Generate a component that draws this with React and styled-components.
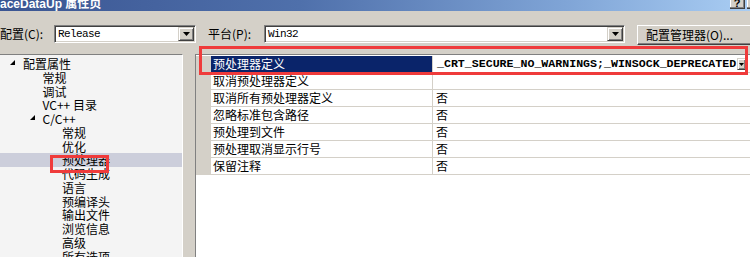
import React from "react";
import styled, { createGlobalStyle } from "styled-components";

const GlobalStyle = createGlobalStyle`
  body {
    margin: 0;
    background: #d4d0c8;
    font-family: "Noto Sans CJK SC", "Liberation Sans", sans-serif;
    color: #000;
  }
`;

const Window = styled.div`
  position: relative;
  width: 750px;
  height: 257px;
  overflow: hidden;
  display: flex;
  flex-direction: column;
  background: #d4d0c8;
`;

const TitleBar = styled.div`
  height: 11px;
  flex: none;
  overflow: hidden;
  display: flex;
  justify-content: space-between;
  background: linear-gradient(
    to right,
    #3a5592 0%,
    #4f70ab 40%,
    #7fa4d6 75%,
    #a9cdf3 100%
  );
`;

const TitleText = styled.span`
  display: block;
  margin-top: -2px;
  color: #fff;
  font-family: "Liberation Sans", "Noto Sans CJK SC", sans-serif;
  font-weight: bold;
  font-size: 12px;
  line-height: 12px;
  white-space: nowrap;
`;

const CaptionButtons = styled.div`
  display: flex;
  gap: 2px;
  margin-right: -12px;
`;

const CaptionButton = styled.div`
  width: 15px;
  height: 9px;
  box-sizing: border-box;
  background: #d4d0c8;
  border-right: 1px solid #404040;
  border-bottom: 1px solid #404040;
  box-shadow: inset -1px -1px 0 #808080, inset 1px 0 0 #fff;
  font-family: "Liberation Sans", sans-serif;
  font-weight: bold;
  font-size: 11px;
  line-height: 6px;
  text-align: center;
  overflow: hidden;
`;

const Toolbar = styled.div`
  height: 43px;
  flex: none;
  box-sizing: border-box;
  padding-top: 14px;
  display: flex;
  align-items: flex-start;
`;

const FieldLabel = styled.div`
  flex: none;
  width: ${(p) => p.$w}px;
  margin-left: ${(p) => p.$gap || 0}px;
  font-size: 12px;
  line-height: 18px;
  white-space: nowrap;
`;

const Combo = styled.div`
  flex: none;
  width: ${(p) => p.$w}px;
  height: 18px;
  box-sizing: border-box;
  display: flex;
  align-items: center;
  padding-left: 3px;
  background: #fff;
  border: 1px solid;
  border-color: #808080 #fff #fff #808080;
  box-shadow: inset 1px 1px 0 #404040, inset -1px -1px 0 #d4d0c8;
  font-family: "Liberation Mono", monospace;
  font-size: 11px;
  letter-spacing: -0.6px;
`;

const DropButton = styled.div`
  flex: none;
  margin-left: auto;
  margin-right: 1px;
  width: ${(p) => p.$w || 16}px;
  height: ${(p) => p.$h || 14}px;
  box-sizing: border-box;
  display: flex;
  align-items: center;
  justify-content: center;
  background: #d4d0c8;
  border: 1px solid;
  border-color: #d4d0c8 #404040 #404040 #d4d0c8;
  box-shadow: inset 1px 1px 0 #fff, inset -1px -1px 0 #808080;
`;

const Arrow = ({ w = 7, h = 4 }) => (
  <svg width={w} height={h} viewBox={`0 0 ${w} ${h}`}>
    <polygon points={`0,0 ${w},0 ${w / 2},${h}`} fill="#000" />
  </svg>
);

const PushButton = styled.div`
  flex: none;
  margin-left: 12px;
  width: 130px;
  height: 20px;
  box-sizing: border-box;
  padding-left: 8px;
  border: 1px solid;
  border-color: #fff #404040 #404040 #fff;
  box-shadow: inset -1px -1px 0 #808080;
  font-size: 12px;
  line-height: 18px;
  white-space: nowrap;
`;

const Body = styled.div`
  flex: 1;
  min-height: 0;
  display: flex;
`;

const TreePanel = styled.div`
  flex: none;
  width: 183px;
  box-sizing: border-box;
  padding-top: 2px;
  background: #f4f4f4;
  border-top: 1px solid #808080;
  border-right: 1px solid #fff;
  overflow: hidden;
`;

const TreeRow = styled.div`
  height: 13.75px;
  display: flex;
  align-items: center;
  padding-left: ${(p) => 10 + p.$depth * 19.5}px;
  background: ${(p) => (p.$selected ? "#cccedb" : "transparent")};
  font-size: 12px;
  line-height: 13.75px;
  white-space: nowrap;
`;

const Expander = styled.span`
  flex: none;
  width: 13px;
  display: flex;
  align-items: center;
  margin-top: -2px;
`;

const Splitter = styled.div`
  flex: none;
  width: 12px;
`;

const Grid = styled.div`
  flex: 1;
  box-sizing: border-box;
  padding-top: 1px;
  background: #fff;
  border-top: 1px solid #808080;
  border-left: 1px solid #808080;
  overflow: hidden;
`;

const PropRow = styled.div`
  display: flex;
  height: 17px;
`;

const Margin = styled.div`
  flex: none;
  width: 15px;
  background: #d4d0c8;
`;

const NameCell = styled.div`
  flex: none;
  width: 222px;
  box-sizing: border-box;
  padding-left: 2px;
  border-right: 1px solid #d4d0c8;
  border-bottom: 1px solid #d4d0c8;
  background: ${(p) => (p.$selected ? "#0a246a" : "#fff")};
  color: ${(p) => (p.$selected ? "#fff" : "#000")};
  font-size: 12px;
  line-height: 16px;
  white-space: nowrap;
`;

const ValueCell = styled.div`
  flex: 1;
  min-width: 0;
  box-sizing: border-box;
  display: flex;
  align-items: center;
  padding-left: 3px;
  border-bottom: 1px solid #d4d0c8;
  font-size: 12px;
  line-height: 16px;
  white-space: nowrap;
`;

const EditText = styled.span`
  padding-left: 1px;
  font-family: "Liberation Mono", monospace;
  font-weight: bold;
  font-size: 11.6px;
`;

const Annotation = styled.div`
  position: absolute;
  left: ${(p) => p.$x}px;
  top: ${(p) => p.$y}px;
  width: ${(p) => p.$w}px;
  height: ${(p) => p.$h}px;
  box-sizing: border-box;
  border: 3px solid #ef3b3b;
  pointer-events: none;
`;

const treeItems = [
  { label: "配置属性", depth: 0, open: true },
  { label: "常规", depth: 1 },
  { label: "调试", depth: 1 },
  { label: "VC++ 目录", depth: 1 },
  { label: "C/C++", depth: 1, open: true },
  { label: "常规", depth: 2 },
  { label: "优化", depth: 2 },
  { label: "预处理器", depth: 2, selected: true },
  { label: "代码生成", depth: 2 },
  { label: "语言", depth: 2 },
  { label: "预编译头", depth: 2 },
  { label: "输出文件", depth: 2 },
  { label: "浏览信息", depth: 2 },
  { label: "高级", depth: 2 },
  { label: "所有选项", depth: 2 },
];

const props = [
  { name: "预处理器定义", value: "_CRT_SECURE_NO_WARNINGS;_WINSOCK_DEPRECATED", edit: true },
  { name: "取消预处理器定义", value: "" },
  { name: "取消所有预处理器定义", value: "否" },
  { name: "忽略标准包含路径", value: "否" },
  { name: "预处理到文件", value: "否" },
  { name: "预处理取消显示行号", value: "否" },
  { name: "保留注释", value: "否" },
];

export default function App() {
  return (
    <Window>
      <GlobalStyle />
      <TitleBar>
        <TitleText>aceDataUp 属性页</TitleText>
        <CaptionButtons>
          <CaptionButton>?</CaptionButton>
          <CaptionButton />
        </CaptionButtons>
      </TitleBar>

      <Toolbar>
        <FieldLabel $w={54}>配置(C):</FieldLabel>
        <Combo $w={142}>
          Release
          <DropButton>
            <Arrow />
          </DropButton>
        </Combo>
        <FieldLabel $w={56} $gap={12}>
          平台(P):
        </FieldLabel>
        <Combo $w={361}>
          Win32
          <DropButton>
            <Arrow />
          </DropButton>
        </Combo>
        <PushButton>配置管理器(O)...</PushButton>
      </Toolbar>

      <Body>
        <TreePanel>
          {treeItems.map((item, i) => (
            <TreeRow key={i} $depth={item.depth} $selected={item.selected}>
              <Expander>
                {item.open && (
                  <svg width="6" height="6" viewBox="0 0 6 6">
                    <polygon points="5,0 5,5 0,5" fill="#000" />
                  </svg>
                )}
              </Expander>
              {item.label}
            </TreeRow>
          ))}
        </TreePanel>
        <Splitter />
        <Grid>
          {props.map((p, i) => (
            <PropRow key={i}>
              <Margin />
              <NameCell $selected={p.edit}>{p.name}</NameCell>
              <ValueCell>
                {p.edit ? (
                  <>
                    <EditText>{p.value}</EditText>
                    <DropButton $w={9} $h={12} style={{ marginRight: 4 }}>
                      <Arrow w={5} h={3} />
                    </DropButton>
                  </>
                ) : (
                  p.value
                )}
              </ValueCell>
            </PropRow>
          ))}
        </Grid>
      </Body>

      <Annotation $x={199} $y={46} $w={549} $h={29} />
      <Annotation $x={50} $y={155} $w={59} $h={18} />
    </Window>
  );
}
